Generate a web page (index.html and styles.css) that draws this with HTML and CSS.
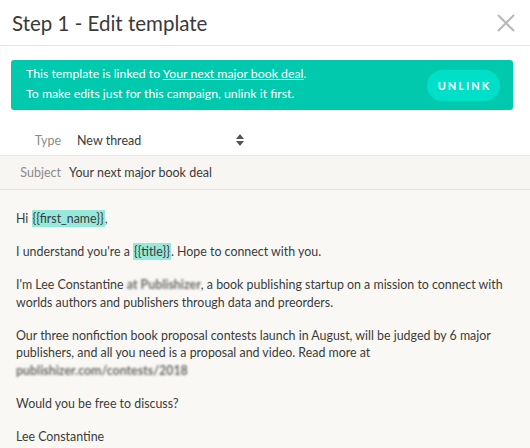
FILE: index.html
```html
<!DOCTYPE html>
<html lang="en">
<head>
  <meta charset="UTF-8" />
  <title>Step 1 - Edit template</title>
  <link rel="stylesheet" href="styles.css">
</head>
<body>

  <div class="modal-header">
    <h1>Step 1 - Edit template</h1>
    <button class="close" aria-label="Close">
      <svg width="18" height="18" viewBox="0 0 18 18">
        <path d="M1 1 L17 17 M17 1 L1 17" stroke="#b8b8b8" stroke-width="2" fill="none" />
      </svg>
    </button>
  </div>

  <div class="banner">
    <div class="banner-text">
      This template is linked to <a href="#">Your next major book deal</a>.<br>
      To make edits just for this campaign, unlink it first.
    </div>
    <button class="unlink">UNLINK</button>
  </div>

  <div class="field type-row">
    <span class="label">Type</span>
    <div class="select">
      <span>New thread</span>
      <svg width="8" height="12" viewBox="0 0 8 12">
        <path d="M4 0 L8 5 L0 5 Z M0 7 L8 7 L4 12 Z" fill="#555" />
      </svg>
    </div>
  </div>

  <div class="field subject-row">
    <span class="label">Subject</span>
    <span class="value">Your next major book deal</span>
  </div>

  <div class="body">
    <p>Hi <span class="tag">{{first_name}}</span>,</p>
    <p>I understand you're a <span class="tag">{{title}}</span>. Hope to connect with you.</p>
    <p>I'm Lee Constantine <span class="blur">at Publishizer</span>, a book publishing startup on a mission to connect with worlds authors and publishers through data and preorders.</p>
    <p>Our three nonfiction book proposal contests launch in August, will be judged by 6 major publishers, and all you need is a proposal and video. Read more at <span class="blur">publishizer.com/contests/2018</span></p>
    <p>Would you be free to discuss?</p>
    <p>Lee Constantine</p>
  </div>

</body>
</html>
```

FILE: styles.css
```css
body {
  margin: 0;
  font-family: Lato, "Open Sans", sans-serif;
  color: #3b3b3b;
  background-color: #ffffff;
  width: 530px;
  height: 448px;
  overflow: hidden;
}

.modal-header {
  display: flex;
  align-items: center;
  justify-content: space-between;
  height: 45px;
  padding: 0 15px 0 12px;
  border-bottom: 1px solid #e6e6e6;
}

h1 {
  margin: 0;
  font-size: 20.5px;
  font-weight: 400;
  color: #3a3a3a;
}

.close {
  background: none;
  border: none;
  padding: 0;
  display: flex;
}

.banner {
  display: flex;
  align-items: center;
  justify-content: space-between;
  margin: 14px 17px 0 11px;
  height: 50px;
  padding: 0 13px 3px 15px;
  box-sizing: border-box;
  background-color: #00c9ad;
  border-radius: 3px;
  color: #ffffff;
  font-size: 12.3px;
  line-height: 20px;
}

.banner a {
  color: #ffffff;
}

.unlink {
  height: 31px;
  width: 73px;
  margin-top: 3px;
  border: none;
  border-radius: 16px;
  background-color: #00dfc8;
  color: #ffffff;
  font-family: inherit;
  font-size: 11px;
  font-weight: 700;
  letter-spacing: 2px;
  padding: 0 0 0 2px;
}

.field {
  display: flex;
  align-items: center;
  font-size: 12.5px;
  border-bottom: 1px solid #e6e6e6;
}

.label {
  width: 61px;
  text-align: right;
  color: #8a8a8a;
}

.type-row {
  margin-top: 15px;
  height: 30px;
}

.select {
  display: flex;
  align-items: center;
  justify-content: space-between;
  width: 167px;
  margin-left: 16px;
  color: #3b3b3b;
}

.subject-row {
  height: 33px;
  background-color: #f7f6f3;
}

.subject-row .value {
  margin-left: 8px;
}

.body {
  background-color: #f9f8f5;
  padding: 20px 10px 20px 16px;
  font-size: 12.4px;
  line-height: 17.5px;
}

.body p {
  margin: 0 0 15.5px;
}

.tag {
  background-color: #97e9dc;
  padding: 1px 1px;
}

.blur {
  display: inline-block;
  color: #6a6a6a;
  font-weight: 700;
  filter: blur(0.9px);
}
```
